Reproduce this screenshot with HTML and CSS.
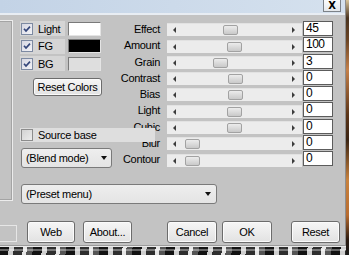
FILE: index.html
```html
<!DOCTYPE html>
<html>
<head>
<meta charset="utf-8">
<link rel="stylesheet" href="styles.css">
</head>
<body>
<div class="screen">
  <div class="dialog">
    <div class="titlebar"><div class="close">X</div></div>
    <div class="dbody">
      <div class="main">
        <div class="preview"></div>
        <div class="content">
          <div class="upper">
            <div class="leftcol">
              <div class="colors">
                <div class="crow">
                  <div class="chk"><span class="box"><svg width="10" height="10" viewBox="0 0 10 10"><path d="M2 4.8 L4 7 L8 2.6" stroke="#34467a" stroke-width="1.7" fill="none"/></svg></span><span>Light</span></div>
                  <span class="swatch sw-light"></span>
                </div>
                <div class="crow">
                  <div class="chk"><span class="box"><svg width="10" height="10" viewBox="0 0 10 10"><path d="M2 4.8 L4 7 L8 2.6" stroke="#34467a" stroke-width="1.7" fill="none"/></svg></span><span>FG</span></div>
                  <span class="swatch sw-fg"></span>
                </div>
                <div class="crow">
                  <div class="chk"><span class="box"><svg width="10" height="10" viewBox="0 0 10 10"><path d="M2 4.8 L4 7 L8 2.6" stroke="#34467a" stroke-width="1.7" fill="none"/></svg></span><span>BG</span></div>
                  <span class="swatch sw-bg"></span>
                </div>
              </div>
              <div class="btn reset-colors">Reset Colors</div>
              <div class="chk source"><span class="box off"></span><span>Source base</span></div>
              <div class="select blend"><span>(Blend mode)</span><span class="arrow"></span></div>
            </div>
            <div class="sliders">
              <div class="lbl">Effect</div><div class="sb"><span class="al"></span><span class="track"><span class="thumb" style="margin-left:47px"></span></span><span class="ar"></span></div><div class="val">45</div>
              <div class="lbl">Amount</div><div class="sb"><span class="al"></span><span class="track"><span class="thumb" style="margin-left:51px"></span></span><span class="ar"></span></div><div class="val">100</div>
              <div class="lbl">Grain</div><div class="sb"><span class="al"></span><span class="track"><span class="thumb" style="margin-left:37px"></span></span><span class="ar"></span></div><div class="val">3</div>
              <div class="lbl">Contrast</div><div class="sb"><span class="al"></span><span class="track"><span class="thumb" style="margin-left:52px"></span></span><span class="ar"></span></div><div class="val">0</div>
              <div class="lbl">Bias</div><div class="sb"><span class="al"></span><span class="track"><span class="thumb" style="margin-left:52px"></span></span><span class="ar"></span></div><div class="val">0</div>
              <div class="lbl">Light</div><div class="sb"><span class="al"></span><span class="track"><span class="thumb" style="margin-left:51px"></span></span><span class="ar"></span></div><div class="val">0</div>
              <div class="lbl">Cubic</div><div class="sb"><span class="al"></span><span class="track"><span class="thumb" style="margin-left:51px"></span></span><span class="ar"></span></div><div class="val">0</div>
              <div class="lbl">Blur</div><div class="sb"><span class="al"></span><span class="track"><span class="thumb" style="margin-left:9px"></span></span><span class="ar"></span></div><div class="val">0</div>
              <div class="lbl">Contour</div><div class="sb"><span class="al"></span><span class="track"><span class="thumb" style="margin-left:9px"></span></span><span class="ar"></span></div><div class="val">0</div>
            </div>
          </div>
          <div class="select preset"><span>(Preset menu)</span><span class="arrow"></span></div>
        </div>
      </div>
      <div class="buttons">
        <div class="ghost"></div>
        <div class="btn b-web">Web</div>
        <div class="btn b-about">About...</div>
        <div class="btn b-cancel">Cancel</div>
        <div class="btn b-ok">OK</div>
        <div class="btn b-reset">Reset</div>
      </div>
    </div>
  </div>
  <div class="photo-right"></div>
  <div class="photo-bottom"></div>
</div>
</body>
</html>
```

FILE: styles.css
```css
* { box-sizing: border-box; }
html, body { margin: 0; padding: 0; }
body {
  width: 349px;
  height: 255px;
  overflow: hidden;
  font-family: "Liberation Sans", Arial, sans-serif;
  font-size: 11px;
  letter-spacing: -0.3px;
  color: #000;
}
.screen {
  display: grid;
  grid-template-columns: 346px 3px;
  grid-template-rows: 246px 9px;
  width: 349px;
  height: 255px;
}
.dialog {
  grid-column: 1;
  grid-row: 1;
  background: #c3c3c3;
  display: flex;
  flex-direction: column;
  border-right: 1px solid #8e8e8e;
  border-bottom: 1px solid #9a9a9a;
}
.photo-right {
  grid-column: 2;
  grid-row: 1 / span 2;
  background: linear-gradient(to bottom, #d8c49a 0, #4a3420 18px, #6a4424 40px, #c4804a 70px, #5a3418 115px, #3a2414 140px, #c8823e 180px, #b86c30 215px, #2a1a10 240px, #1a1a1a 255px);
}
.photo-bottom {
  grid-column: 1;
  grid-row: 2;
  background:
    linear-gradient(to bottom, #eaeaea 0 1px, transparent 1px),
    linear-gradient(to bottom, transparent 0 3px, rgba(255,255,255,0.35) 3px 5px, transparent 5px),
    repeating-linear-gradient(96deg, #121212 0 9px, #cfcfcf 9px 14px, #2e2e2e 14px 23px, #e6e6e6 23px 27px, #555 27px 33px);
}

/* title bar */
.titlebar {
  height: 15px;
  background: linear-gradient(90deg, #c3d3e6, #d5e1ee);
  border-bottom: 2px solid #e8edf3;
  display: flex;
  justify-content: flex-end;
  padding-right: 4px;
}
.close {
  width: 18px;
  height: 12px;
  background: linear-gradient(#fbfcfd, #e4e8ec);
  border: 1px solid #7c8288;
  border-top: none;
  font-family: "DejaVu Sans", sans-serif;
  font-weight: bold;
  font-size: 10px;
  line-height: 11px;
  text-align: center;
  letter-spacing: 0;
}

.dbody { flex: 1; display: flex; flex-direction: column; }
.main { display: flex; }
.preview {
  width: 13px;
  height: 181px;
  margin-top: 5px;
  border: 1px solid #ececec;
  border-left: none;
  box-shadow: inset -1px -1px 0 #a4a4a4, inset 0 1px 0 #a4a4a4;
}
.content {
  margin-left: 7px;
  padding-top: 6px;
  display: flex;
  flex-direction: column;
}
.upper { display: flex; }

/* left column */
.leftcol { width: 83px; display: flex; flex-direction: column; }
.colors { display: flex; flex-direction: column; gap: 2.5px; }
.crow { display: flex; align-items: center; height: 15px; }
.chk {
  display: flex;
  align-items: center;
  gap: 5px;
  width: 45px;
  height: 15px;
  padding-left: 1px;
  background: #d5d5d5;
}
.box {
  width: 12px;
  height: 12px;
  border: 1px solid #7d8aa2;
  background: linear-gradient(135deg, #d6d7e2, #f3f3f7);
  display: flex;
  align-items: center;
  justify-content: center;
  flex: none;
}
.box.off {
  border-color: #8c8c8c;
  background: linear-gradient(135deg, #d2d2d2, #ececec);
}
.swatch {
  width: 33px;
  height: 14px;
  margin-left: 3px;
  border-top: 1px solid #7a7a7a;
  border-left: 1px solid #7a7a7a;
  border-right: 1px solid #e4e4e4;
  border-bottom: 1px solid #e4e4e4;
}
.sw-light { background: #ffffff; }
.sw-fg { background: #000000; }
.sw-bg { background: #dedede; }

.btn {
  display: flex;
  align-items: center;
  justify-content: center;
  border: 1px solid #6c6c6c;
  border-radius: 3px;
  background: linear-gradient(#f6f6f6, #e2e2e2);
  box-shadow: inset 0 0 0 1px #fbfbfb;
}
.reset-colors {
  margin-top: 7px;
  margin-left: 13px;
  width: 69px;
  height: 18px;
}
.source {
  position: relative;
  z-index: 1;
  width: 135px;
  height: 14px;
  margin-top: 32px;
  background: #dedede;
}

.select {
  display: flex;
  align-items: center;
  justify-content: space-between;
  border: 1px solid #7a7a7a;
  border-radius: 3px;
  background: linear-gradient(#eeeeee, #e4e4e4);
  padding: 0 4px 0 4px;
}
.arrow {
  width: 0;
  height: 0;
  border-left: 3.5px solid transparent;
  border-right: 3.5px solid transparent;
  border-top: 4px solid #111;
}
.blend {
  width: 91px;
  height: 20px;
  margin-top: 6px;
  margin-left: 1px;
}
.preset {
  width: 196px;
  height: 20px;
  margin-top: 16px;
  margin-left: 1px;
  padding-right: 5px;
}

/* sliders */
.sliders {
  display: grid;
  grid-template-columns: 57px 135px 30px;
  grid-auto-rows: 16.3px;
}
.lbl {
  text-align: right;
  line-height: 16px;
  white-space: nowrap;
}
.sb {
  margin-left: 7px;
  width: 135px;
  height: 13px;
  align-self: end;
  margin-bottom: 1px;
  display: flex;
  align-items: center;
  padding: 0 7px 0 6px;
  background: #ececec;
  border-top: 1px solid #e2e2e2;
}
.al {
  width: 0; height: 0;
  border-top: 3px solid transparent;
  border-bottom: 3px solid transparent;
  border-right: 3px solid #3c3c3c;
  flex: none;
}
.ar {
  width: 0; height: 0;
  border-top: 3px solid transparent;
  border-bottom: 3px solid transparent;
  border-left: 3px solid #3c3c3c;
  flex: none;
}
.track { flex: 1; display: flex; align-items: center; }
.thumb {
  width: 15px;
  height: 10px;
  border: 1px solid #a2a2a2;
  border-radius: 2px;
  background: linear-gradient(#ececec, #c9c9c9);
  flex: none;
}
.val {
  margin-left: 8px;
  width: 30px;
  height: 15px;
  background: #fff;
  border: 1px solid #5c5c5c;
  font-size: 12px;
  letter-spacing: -0.5px;
  line-height: 13px;
  padding-left: 2px;
}

/* bottom buttons */
.buttons {
  display: flex;
  margin-top: 17px;
  height: 22px;
}
.ghost {
  width: 17px;
  height: 17px;
  margin-top: 4px;
  border: 1px solid #e6e6e6;
  border-left: none;
}
.buttons .btn { height: 22px; }
.b-web { width: 48px; margin-left: 10px; }
.b-about { width: 49px; margin-left: 8px; }
.b-cancel { width: 50px; margin-left: 35px; }
.b-ok { width: 50px; margin-left: 5px; }
.b-reset { width: 49px; margin-left: 19px; }
```
